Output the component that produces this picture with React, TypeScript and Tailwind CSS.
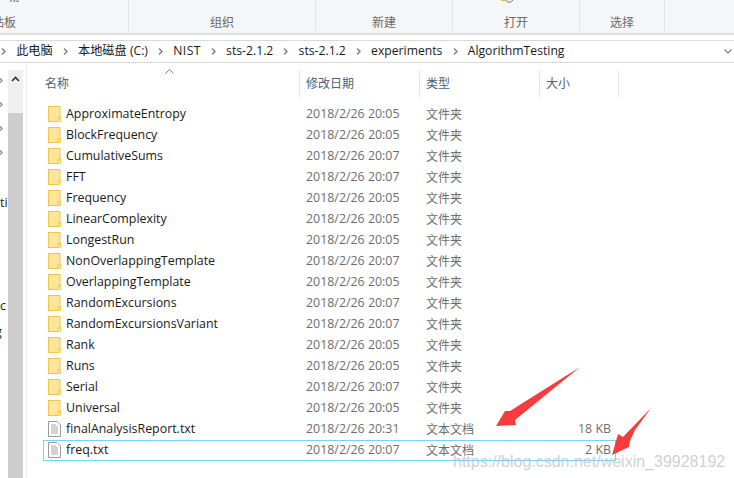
const font = { fontFamily: '"Open Sans", "Noto Sans CJK SC", sans-serif' };

const rows = [
  ['ApproximateEntropy', '2018/2/26 20:05'],
  ['BlockFrequency', '2018/2/26 20:05'],
  ['CumulativeSums', '2018/2/26 20:07'],
  ['FFT', '2018/2/26 20:07'],
  ['Frequency', '2018/2/26 20:05'],
  ['LinearComplexity', '2018/2/26 20:05'],
  ['LongestRun', '2018/2/26 20:05'],
  ['NonOverlappingTemplate', '2018/2/26 20:07'],
  ['OverlappingTemplate', '2018/2/26 20:05'],
  ['RandomExcursions', '2018/2/26 20:07'],
  ['RandomExcursionsVariant', '2018/2/26 20:07'],
  ['Rank', '2018/2/26 20:05'],
  ['Runs', '2018/2/26 20:05'],
  ['Serial', '2018/2/26 20:07'],
  ['Universal', '2018/2/26 20:05'],
];

const crumbs = [
  { id: 'pc', label: '此电脑' },
  { id: 'disk', label: '本地磁盘 (C:)' },
  { id: 'nist', label: 'NIST', wide: true },
  { id: 'sts1', label: 'sts-2.1.2' },
  { id: 'sts2', label: 'sts-2.1.2' },
  { id: 'exp', label: 'experiments' },
  { id: 'alg', label: 'AlgorithmTesting' },
];

function FolderIcon() {
  return (
    <svg width="13" height="16" viewBox="0 0 13 16" className="shrink-0">
      <rect x="0.5" y="0.5" width="11.5" height="15" fill="#fde59a" stroke="#eec64f" />
      <path d="M10 15.5V11.5H12.5V15.5" fill="#fbe9ae" stroke="#eec64f" />
    </svg>
  );
}

function FileIcon() {
  return (
    <svg width="13" height="16" viewBox="0 0 13 16" className="shrink-0">
      <path d="M0.5 0.5H9L12.5 4V15.5H0.5Z" fill="#fff" stroke="#9a9a9a" />
      <path d="M3 4H8M3 6H10M3 8H10M3 10H10M3 12H10" stroke="#a8a8a8" />
    </svg>
  );
}

function Chevron({ color = '#7d7d7d' }: { color?: string }) {
  return (
    <svg width="5" height="7" viewBox="0 0 5 7" className="shrink-0">
      <path d="M1 0.5L4 3.5L1 6.5" fill="none" stroke={color} strokeWidth="1.4" />
    </svg>
  );
}

function Row({ name, date, type, size, file, selected }: { name: string; date: string; type: string; size?: string; file?: boolean; selected?: boolean }) {
  return (
    <div className={`flex h-[21px] items-center border ${selected ? 'border-sky-300' : 'border-transparent'}`}>
      <div className="flex w-[262px] items-center gap-[5px] pl-[4px] text-[#1a1a1a]">
        {file ? <FileIcon /> : <FolderIcon />}
        <span>{name}</span>
      </div>
      <div className="w-[120px] text-[#6d6d6d]">{date}</div>
      <div className="w-[100px] text-[12px] text-[#6d6d6d]">{type}</div>
      <div className="w-[85px] text-right text-[#6d6d6d]">{size}</div>
    </div>
  );
}

export default function App() {
  return (
    <div className="relative flex h-[478px] w-[734px] flex-col overflow-hidden bg-white text-[12.4px]" style={font}>
      {/* Ribbon */}
      <div className="flex h-[35px] border-b-2 border-[#dfe0e1] bg-[#f5f6f7] text-[12px] leading-4 text-[#6a6a6a]">
        <div className="flex h-[31px] w-[129px] flex-col justify-between overflow-hidden border-r border-[#e2e3e4]">
          <span className="-mt-[11px] ml-[8px]">易</span>
          <span className="-ml-[20px]">剪贴板</span>
        </div>
        <div className="flex h-[31px] w-[187px] items-end justify-center border-r border-[#e2e3e4]">组织</div>
        <div className="flex h-[31px] w-[137px] items-end justify-center border-r border-[#e2e3e4]">新建</div>
        <div className="flex h-[31px] w-[127px] items-end justify-center border-r border-[#e2e3e4]">打开</div>
        <div className="flex h-[31px] w-[85px] items-end justify-center border-r border-[#e2e3e4]">选择</div>
      </div>

      {/* Address bar */}
      <div className="mt-[5px] flex h-[23px] items-center justify-between border-y border-[#d9d9d9] pr-[2px] text-[12.2px] text-[#1a1a1a]">
        <div className="flex items-center gap-[10.15px] pl-px">
          {crumbs.map((c) => (
            <div key={c.id} className="contents">
              <Chevron />
              <span className={c.wide ? 'tracking-[0.4px]' : ''}>{c.label}</span>
            </div>
          ))}
        </div>
        <svg width="8" height="5" viewBox="0 0 8 5">
          <path d="M0.5 0.5L4 4L7.5 0.5" fill="none" stroke="#7d7d7d" strokeWidth="1.2" />
        </svg>
      </div>

      <div className="flex min-h-0 flex-1">
        {/* Nav pane sliver */}
        <div className="flex w-[8px] shrink-0 flex-col items-start overflow-hidden pt-[14px] leading-4 text-[#1a1a1a]">
          <div className="-ml-[2px] flex flex-col gap-[17px]">
            <Chevron color="#9a9a9a" />
            <Chevron color="#9a9a9a" />
            <Chevron color="#9a9a9a" />
            <Chevron color="#9a9a9a" />
          </div>
          <div className="mt-[39px]">ti</div>
          <div className="mt-[87px]">c</div>
          <div className="-ml-[5px] mt-[10px]">g</div>
        </div>

        {/* Scrollbar */}
        <div className="mt-[7px] flex w-[15px] shrink-0 flex-col bg-[#f0f0f0]">
          <div className="flex h-[18px] items-center justify-center">
            <svg width="9" height="6" viewBox="0 0 9 6">
              <path d="M1 5L4.5 1.5L8 5" fill="none" stroke="#333" strokeWidth="1.6" />
            </svg>
          </div>
          <div className="mt-[25px] flex-1 bg-[#cdcdcd]" />
        </div>

        {/* File list */}
        <div className="ml-[3px] flex-1 border-l border-[#f0f0f0] pl-[16px]">
          <div className="mt-[7px] flex h-[27px] text-[12px] text-[#4c607a]">
            <div className="relative w-[256px] pl-[2px] pt-[5px]">
              名称
              <svg width="9" height="5" viewBox="0 0 9 5" className="absolute left-[122px] top-[-1px]">
                <path d="M0.5 4.5L4.5 0.5L8.5 4.5" fill="none" stroke="#7d7d7d" />
              </svg>
            </div>
            <div className="w-[120px] border-l border-[#e5e5e5] pl-[6px] pt-[5px]">修改日期</div>
            <div className="w-[120px] border-l border-[#e5e5e5] pl-[6px] pt-[5px]">类型</div>
            <div className="w-[80px] border-x border-[#e5e5e5] pl-[6px] pt-[5px]">大小</div>
          </div>
          <div className="mt-[7px] w-[573px]">
            {rows.map(([name, date]) => (
              <Row key={name} name={name} date={date} type="文件夹" />
            ))}
            <Row name="finalAnalysisReport.txt" date="2018/2/26 20:31" type="文本文档" size="18 KB" file />
            <Row name="freq.txt" date="2018/2/26 20:07" type="文本文档" size="2 KB" file selected />
          </div>
        </div>
      </div>

      {/* Ribbon icon remnant */}
      <svg width="16" height="4" viewBox="0 0 16 4" className="absolute left-[501px] top-0">
        <path d="M0 0H4V1H0Z" fill="#e5b93c" />
        <path d="M5 0C6 3 10 3 12 0" fill="#eee" stroke="#777" />
      </svg>

      {/* Annotation arrows */}
      <svg width="734" height="478" viewBox="0 0 734 478" className="pointer-events-none absolute left-0 top-0">
        <path d="M580 367L510 411L505 411L496 426L516 425L515 420Z" fill="#f73c3c" />
        <path d="M651 408L623 437L618 434L612 455L629 447L630 441L635 430Z" fill="#f73c3c" />
      </svg>

      {/* Watermark */}
      <div className="pointer-events-none absolute left-[453px] top-[450px] text-[16px] text-[#b9bcc0]/70" style={{ fontFamily: '"Liberation Sans", sans-serif' }}>
        https://blog.csdn.net/weixin_39928192
      </div>
    </div>
  );
}
